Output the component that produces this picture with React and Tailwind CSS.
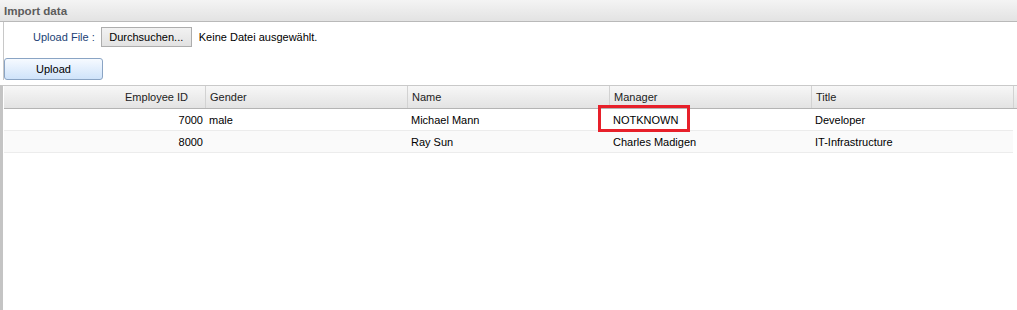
const columns = [
  { key: 'id', label: 'Employee ID', align: 'right' },
  { key: 'gender', label: 'Gender' },
  { key: 'name', label: 'Name' },
  { key: 'manager', label: 'Manager' },
  { key: 'title', label: 'Title' },
];

const rows = [
  { id: '7000', gender: 'male', name: 'Michael Mann', manager: 'NOTKNOWN', title: 'Developer' },
  { id: '8000', gender: '', name: 'Ray Sun', manager: 'Charles Madigen', title: 'IT-Infrastructure' },
];

export default function App() {
  return (
    <div className="relative h-[310px] w-[1017px] overflow-hidden bg-white text-[11px] text-black" style={{ fontFamily: '"Liberation Sans", Arial, sans-serif' }}>
      <div className="h-[22px] border-b border-[#b9b9b9] bg-gradient-to-b from-[#f4f4f4] to-[#e3e3e3] pl-[4px] text-[11.6px] font-bold leading-[21px] text-[#5c5c5c]">
        Import data
      </div>

      <div className="ml-[3px] border-l border-[#c8c8c8]">
        <div className="flex h-[36px] items-start pl-[29px] pt-[5px]">
          <span className="leading-[20px] text-[#1c3f75]">Upload File :</span>
          <button className="ml-[6px] h-[20px] w-[91px] border border-[#adadad] bg-gradient-to-b from-[#f2f2f2] to-[#e2e2e2] text-[11px] leading-[18px] text-black">
            Durchsuchen...
          </button>
          <span className="ml-[7px] leading-[20px]">Keine Datei ausgewählt.</span>
        </div>
        <div>
          <button className="h-[22px] w-[99px] rounded-[3px] border border-[#8aa4c4] bg-gradient-to-b from-[#f6faff] to-[#cfe3fa] text-[11px] leading-[20px] text-black">
            Upload
          </button>
        </div>
      </div>

      <div className="mt-[5px] h-[225px] border-l-[3px] border-t border-[#c4c4c4] border-t-[#c9c9c9] pl-[1px]">
        <div className="flex h-[23px] border-b border-[#b4b4b4] bg-gradient-to-b from-[#f7f7f7] to-[#e3e3e3] text-[#222]">
          {columns.map((c) => (
            <div
              key={c.key}
              className={c.align === 'right'
                ? 'w-[202px] shrink-0 border-r border-[#d2d2d2] pr-[17px] text-right leading-[22px]'
                : 'w-[202px] shrink-0 border-r border-[#d2d2d2] pl-[4px] leading-[22px]'}
            >
              {c.label}
            </div>
          ))}
          <div className="flex-1" />
        </div>
        {rows.map((r, i) => (
          <div key={r.id} className={i % 2 ? 'flex h-[22px] w-[1009px] border-b border-[#ececec] bg-[#fafafa]' : 'flex h-[22px] w-[1009px] border-b border-[#ececec] bg-white'}>
            {columns.map((c) => (
              <div
                key={c.key}
                className={c.align === 'right'
                  ? 'w-[202px] shrink-0 pr-[3px] text-right leading-[22px]'
                  : 'w-[202px] shrink-0 pl-[3px] leading-[22px]'}
              >
                {r[c.key]}
              </div>
            ))}
          </div>
        ))}
      </div>

      <div className="absolute left-[598px] top-[105px] h-[27px] w-[92px] border-[3px] border-[#e7202a]" />
    </div>
  );
}
